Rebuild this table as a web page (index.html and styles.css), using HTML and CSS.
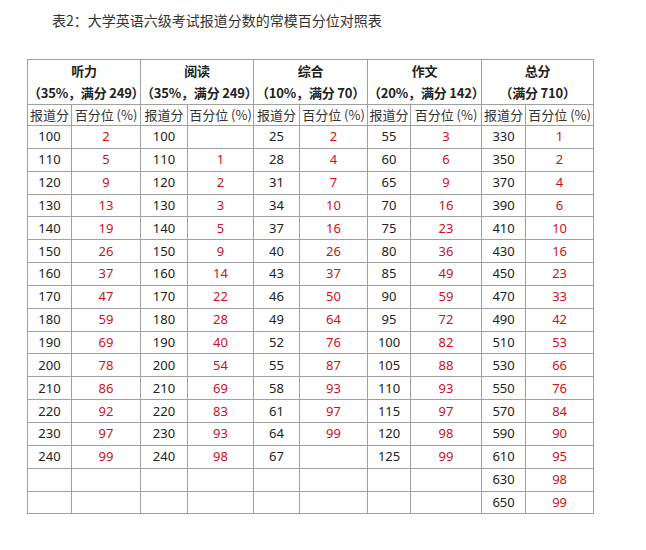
FILE: index.html
```html
<!DOCTYPE html>
<html lang="zh">
<head>
<meta charset="utf-8">
<link rel="stylesheet" href="styles.css">
</head>
<body>
<div class="page">
<p class="title">表2：大学英语六级考试报道分数的常模百分位对照表</p>
<table class="grid">
<colgroup>
<col class="c1"><col class="c2"><col class="c3"><col class="c4"><col class="c5"><col class="c6"><col class="c7"><col class="c8"><col class="c9"><col class="c10">
</colgroup>
<thead>
<tr class="head">
<th colspan="2">听力<br>（35%，满分 249）</th>
<th colspan="2">阅读<br>（35%，满分 249）</th>
<th colspan="2">综合<br>（10%，满分 70）</th>
<th colspan="2">作文<br>（20%，满分 142）</th>
<th colspan="2">总分<br>（满分 710）</th>
</tr>
<tr class="sub">
<td>报道分</td><td>百分位 (%)</td>
<td>报道分</td><td>百分位 (%)</td>
<td>报道分</td><td>百分位 (%)</td>
<td>报道分</td><td>百分位 (%)</td>
<td>报道分</td><td>百分位 (%)</td>
</tr>
</thead>
<tbody>
<tr><td>100</td><td class="r">2</td><td>100</td><td class="r"></td><td>25</td><td class="r">2</td><td>55</td><td class="r">3</td><td>330</td><td class="r">1</td></tr>
<tr><td>110</td><td class="r">5</td><td>110</td><td class="r">1</td><td>28</td><td class="r">4</td><td>60</td><td class="r">6</td><td>350</td><td class="r">2</td></tr>
<tr><td>120</td><td class="r">9</td><td>120</td><td class="r">2</td><td>31</td><td class="r">7</td><td>65</td><td class="r">9</td><td>370</td><td class="r">4</td></tr>
<tr><td>130</td><td class="r">13</td><td>130</td><td class="r">3</td><td>34</td><td class="r">10</td><td>70</td><td class="r">16</td><td>390</td><td class="r">6</td></tr>
<tr><td>140</td><td class="r">19</td><td>140</td><td class="r">5</td><td>37</td><td class="r">16</td><td>75</td><td class="r">23</td><td>410</td><td class="r">10</td></tr>
<tr><td>150</td><td class="r">26</td><td>150</td><td class="r">9</td><td>40</td><td class="r">26</td><td>80</td><td class="r">36</td><td>430</td><td class="r">16</td></tr>
<tr><td>160</td><td class="r">37</td><td>160</td><td class="r">14</td><td>43</td><td class="r">37</td><td>85</td><td class="r">49</td><td>450</td><td class="r">23</td></tr>
<tr><td>170</td><td class="r">47</td><td>170</td><td class="r">22</td><td>46</td><td class="r">50</td><td>90</td><td class="r">59</td><td>470</td><td class="r">33</td></tr>
<tr><td>180</td><td class="r">59</td><td>180</td><td class="r">28</td><td>49</td><td class="r">64</td><td>95</td><td class="r">72</td><td>490</td><td class="r">42</td></tr>
<tr><td>190</td><td class="r">69</td><td>190</td><td class="r">40</td><td>52</td><td class="r">76</td><td>100</td><td class="r">82</td><td>510</td><td class="r">53</td></tr>
<tr><td>200</td><td class="r">78</td><td>200</td><td class="r">54</td><td>55</td><td class="r">87</td><td>105</td><td class="r">88</td><td>530</td><td class="r">66</td></tr>
<tr><td>210</td><td class="r">86</td><td>210</td><td class="r">69</td><td>58</td><td class="r">93</td><td>110</td><td class="r">93</td><td>550</td><td class="r">76</td></tr>
<tr><td>220</td><td class="r">92</td><td>220</td><td class="r">83</td><td>61</td><td class="r">97</td><td>115</td><td class="r">97</td><td>570</td><td class="r">84</td></tr>
<tr><td>230</td><td class="r">97</td><td>230</td><td class="r">93</td><td>64</td><td class="r">99</td><td>120</td><td class="r">98</td><td>590</td><td class="r">90</td></tr>
<tr><td>240</td><td class="r">99</td><td>240</td><td class="r">98</td><td>67</td><td class="r"></td><td>125</td><td class="r">99</td><td>610</td><td class="r">95</td></tr>
<tr><td></td><td></td><td></td><td></td><td></td><td></td><td></td><td></td><td>630</td><td class="r">98</td></tr>
<tr><td></td><td></td><td></td><td></td><td></td><td></td><td></td><td></td><td>650</td><td class="r">99</td></tr>
</tbody>
</table>
</div>
</body>
</html>
```
FILE: styles.css
```css
html, body {
  margin: 0;
  padding: 0;
  background: #ffffff;
}
.page {
  padding: 11px 0 0 27px;
  font-family: "Noto Sans", "Noto Sans CJK SC", sans-serif;
  color: #222222;
}
.title {
  margin: 0 0 29px 25px;
  font-family: "Noto Sans CJK SC", sans-serif;
  font-size: 14px;
  line-height: 19px;
  color: #333333;
}
.grid {
  border-collapse: collapse;
  table-layout: fixed;
  width: 567px;
  font-size: 13px;
}
.c1 { width: 44px; }
.c2 { width: 69px; }
.c3 { width: 47px; }
.c4 { width: 66px; }
.c5 { width: 46px; }
.c6 { width: 68px; }
.c7 { width: 43px; }
.c8 { width: 71px; }
.c9 { width: 44px; }
.c10 { width: 68px; }
.grid th, .grid td {
  border: 1px solid #a0a0a0;
  padding: 0;
  text-align: center;
  vertical-align: middle;
  white-space: nowrap;
}
.grid th {
  height: 44px;
  font-family: "Noto Sans CJK SC", sans-serif;
  font-weight: bold;
  font-size: 13px;
  line-height: 22px;
  color: #222222;
  letter-spacing: -0.2px;
}
.sub td {
  height: 20px;
  font-family: "Noto Sans CJK SC", sans-serif;
  font-size: 13px;
  line-height: 20px;
  color: #333333;
}
.grid tbody td {
  height: 21.85px;
  line-height: 21px;
  color: #222222;
}
.grid tbody td.r {
  color: #cc1122;
}
```
